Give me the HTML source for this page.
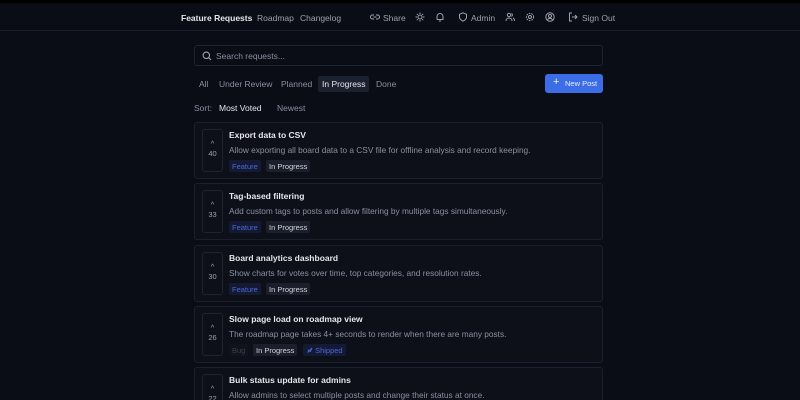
<!DOCTYPE html>
<html style="width:800px;height:400px;overflow:hidden"><head><style>
*{box-sizing:border-box;margin:0;padding:0}
body{width:800px;height:400px;overflow:hidden;background:#0a0c16;font-family:"Liberation Sans",sans-serif;color:#e5e7eb;position:relative}
.top{position:absolute;left:0;top:0;width:800px;height:3px;background:#000}
.hdr{position:absolute;left:0;top:3px;width:800px;height:28px;border-bottom:1px solid #1a1e2c;background:#0a0c16}
.hdr span{position:absolute;top:10px;font-size:8.5px;color:#9ca3af;white-space:nowrap}
.ico{position:absolute;top:9px;width:10px;height:10px}
.search{position:absolute;left:194px;top:45px;width:409px;height:21px;border:1px solid #1f2433;border-radius:3px;font-size:8.5px;color:#8b90a0;padding:5px 0 0 21px}
.tabs span{position:absolute;top:79px;font-size:8.5px;color:#8b90a0}
.btn{position:absolute;left:545px;top:74px;width:58px;height:19px;background:#3b6ee6;border-radius:3px;font-size:7.5px;color:#e8eeff;padding:5px 0 0 20px}
.card{position:absolute;left:194px;width:409px;height:57px;border:1px solid #1b1f2d;border-radius:3px;background:#0d1019}
.vote{position:absolute;left:7px;top:6px;width:21px;height:43px;border:1px solid #1e2332;border-radius:3px;text-align:center;font-size:7.5px;color:#9ca3af;padding-top:9px;line-height:10px}
.t{position:absolute;left:34px;top:7px;font-size:8.5px;font-weight:bold;color:#e5e7eb}
.d{position:absolute;left:34px;top:22px;font-size:8.3px;color:#8b90a0;white-space:nowrap}
.tg{position:absolute;top:37px;height:12px;font-size:7.5px;padding:2px 3px;border-radius:2px;white-space:nowrap}
.f{background:#141a33;color:#4a68d8}
.p{background:#1b1f2b;color:#d1d5db}
</style></head><body>
<div class="top"></div>
<div class="hdr">
<span style="left:181px;color:#e5e7eb;font-weight:bold">Feature Requests</span>
<span style="left:257px">Roadmap</span>
<span style="left:300px">Changelog</span>
<svg class="ico" style="left:370px" viewBox="0 0 10 10" fill="none" stroke="#9ca3af" stroke-width="1"><path d="M4 3H2.5a2 2 0 0 0 0 4H4M6 3h1.5a2 2 0 0 1 0 4H6M3.5 5h3"/></svg>
<span style="left:383px">Share</span>
<svg class="ico" style="left:415px" viewBox="0 0 10 10" fill="none" stroke="#9ca3af" stroke-width="1"><circle cx="5" cy="5" r="2"/><path d="M5 0.5v1.5M5 8v1.5M0.5 5H2M8 5h1.5M1.8 1.8l1 1M7.2 7.2l1 1M1.8 8.2l1-1M7.2 2.8l1-1"/></svg>
<svg class="ico" style="left:435px" viewBox="0 0 10 10" fill="none" stroke="#9ca3af" stroke-width="1"><path d="M2 7.5V4.5a3 3 0 0 1 6 0v3H2M4 9h2"/></svg>
<svg class="ico" style="left:458px" viewBox="0 0 10 10" fill="none" stroke="#9ca3af" stroke-width="1"><path d="M5 0.8L8.5 2.3v3C8.5 7.5 5 9.2 5 9.2S1.5 7.5 1.5 5.3v-3z"/></svg>
<span style="left:471px">Admin</span>
<svg class="ico" style="left:505px" viewBox="0 0 10 10" fill="none" stroke="#9ca3af" stroke-width="1"><circle cx="4" cy="3" r="1.7"/><path d="M1 9c0-2 1.5-3 3-3s3 1 3 3M6.5 1.5a1.7 1.7 0 0 1 0 3M8 6c1 .4 1.5 1.5 1.5 3"/></svg>
<svg class="ico" style="left:525px" viewBox="0 0 10 10" fill="none" stroke="#9ca3af" stroke-width="1"><circle cx="5" cy="5" r="1.5"/><circle cx="5" cy="5" r="3.6" stroke-dasharray="1.6 1"/></svg>
<svg class="ico" style="left:545px" viewBox="0 0 10 10" fill="none" stroke="#9ca3af" stroke-width="1"><circle cx="5" cy="5" r="4.2"/><circle cx="5" cy="4" r="1.5"/><path d="M2.5 8c.7-1.3 1.5-1.7 2.5-1.7s1.8.4 2.5 1.7"/></svg>
<svg class="ico" style="left:568px" viewBox="0 0 10 10" fill="none" stroke="#9ca3af" stroke-width="1"><path d="M4 1H1.5v8H4M4 5h5M7 3l2 2-2 2"/></svg>
<span style="left:582px">Sign Out</span>
</div>
<div class="search"><svg style="position:absolute;left:7px;top:5px" width="10" height="10" viewBox="0 0 10 10" fill="none" stroke="#9ca3af" stroke-width="1.1"><circle cx="4.3" cy="4.3" r="3.2"/><path d="M6.7 6.7L9 9"/></svg>Search requests...</div>
<div class="tabs">
<span style="left:199px">All</span>
<span style="left:219px">Under Review</span>
<span style="left:281px">Planned</span>
<span style="left:318px;top:76px;background:#1c2130;color:#e5e7eb;padding:3px 4px;border-radius:2px">In Progress</span>
<span style="left:376px">Done</span>
<span style="left:194px;top:103px">Sort:</span>
<span style="left:219px;top:103px;color:#e5e7eb">Most Voted</span>
<span style="left:277px;top:103px">Newest</span>
</div>
<div class="btn"><span style="position:absolute;left:8px;top:2px;font-size:11px">+</span>New Post</div>

<div class="card" style="top:122px"><div class="vote">^<br>40</div><div class="t">Export data to CSV</div><div class="d">Allow exporting all board data to a CSV file for offline analysis and record keeping.</div><span class="tg f" style="left:34px">Feature</span><span class="tg p" style="left:71px">In Progress</span></div>
<div class="card" style="top:183px"><div class="vote">^<br>33</div><div class="t">Tag-based filtering</div><div class="d">Add custom tags to posts and allow filtering by multiple tags simultaneously.</div><span class="tg f" style="left:34px">Feature</span><span class="tg p" style="left:71px">In Progress</span></div>
<div class="card" style="top:245px"><div class="vote">^<br>30</div><div class="t">Board analytics dashboard</div><div class="d">Show charts for votes over time, top categories, and resolution rates.</div><span class="tg f" style="left:34px">Feature</span><span class="tg p" style="left:71px">In Progress</span></div>
<div class="card" style="top:306px"><div class="vote">^<br>26</div><div class="t">Slow page load on roadmap view</div><div class="d">The roadmap page takes 4+ seconds to render when there are many posts.</div><span class="tg" style="left:34px;color:#3a3f4e;background:#10131d">Bug</span><span class="tg p" style="left:58px">In Progress</span><span class="tg f" style="left:108px"><svg width="7" height="7" viewBox="0 0 10 10" fill="none" stroke="#4a68d8" stroke-width="1.3" style="vertical-align:-1px"><path d="M2 8l2-2M3 5l2 2M4 6L8.5 1.5 6 7M4 6L3 3.5"/></svg> Shipped</span></div>
<div class="card" style="top:367px;height:40px"><div class="vote" style="height:40px">^<br>22</div><div class="t">Bulk status update for admins</div><div class="d">Allow admins to select multiple posts and change their status at once.</div></div>
</body></html>
